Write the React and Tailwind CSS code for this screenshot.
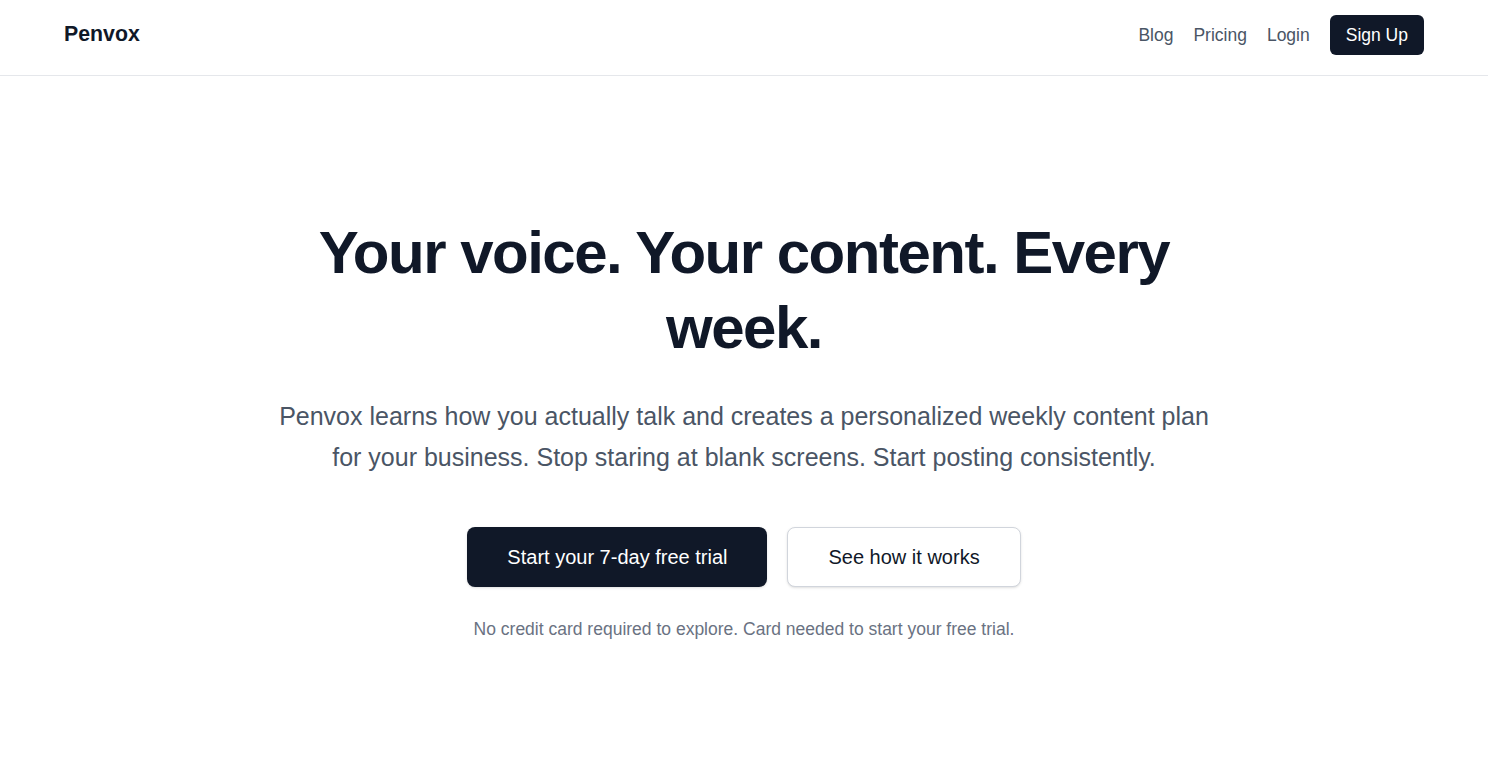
import React from "react";

export default function App() {
  return (
    <div
      className="min-h-screen bg-white"
      style={{ fontFamily: '"Liberation Sans", Arial, sans-serif' }}
    >
      <div className="mr-[7px]">
        <header className="h-[76px] border-b border-gray-200 bg-white">
          <div className="flex h-[70px] items-center justify-between px-16">
            <div className="text-[21.3px] font-bold text-gray-900">Penvox</div>
            <nav className="flex items-center gap-5 text-[17.5px] text-gray-600">
              <a href="#" className="hover:text-gray-900">Blog</a>
              <a href="#" className="hover:text-gray-900">Pricing</a>
              <a href="#" className="hover:text-gray-900">Login</a>
              <a
                href="#"
                className="flex h-10 items-center rounded-md bg-gray-900 px-4 font-medium text-white"
              >
                Sign Up
              </a>
            </nav>
          </div>
        </header>

        <main className="flex flex-col items-center pt-[139px] text-center">
          <h1 className="max-w-4xl text-[60px] font-bold leading-[75px] tracking-tight text-gray-900">
            Your voice. Your content. Every week.
          </h1>
          <p className="mt-[31px] max-w-[950px] text-[25px] leading-[40.6px] text-gray-600">
            Penvox learns how you actually talk and creates a personalized weekly
            content plan for your business. Stop staring at blank screens. Start
            posting consistently.
          </p>
          <div className="mt-[50px] flex items-center gap-5">
            <button className="h-[60px] rounded-lg bg-gray-900 px-10 text-[20px] font-medium text-white shadow-sm">
              Start your 7-day free trial
            </button>
            <button className="h-[60px] rounded-lg border border-gray-300 bg-white px-10 text-[20px] font-medium text-gray-900 shadow-sm">
              See how it works
            </button>
          </div>
          <p className="mt-[29px] text-[17.5px] leading-[26px] text-gray-500">
            No credit card required to explore. Card needed to start your free trial.
          </p>
        </main>
      </div>
    </div>
  );
}
